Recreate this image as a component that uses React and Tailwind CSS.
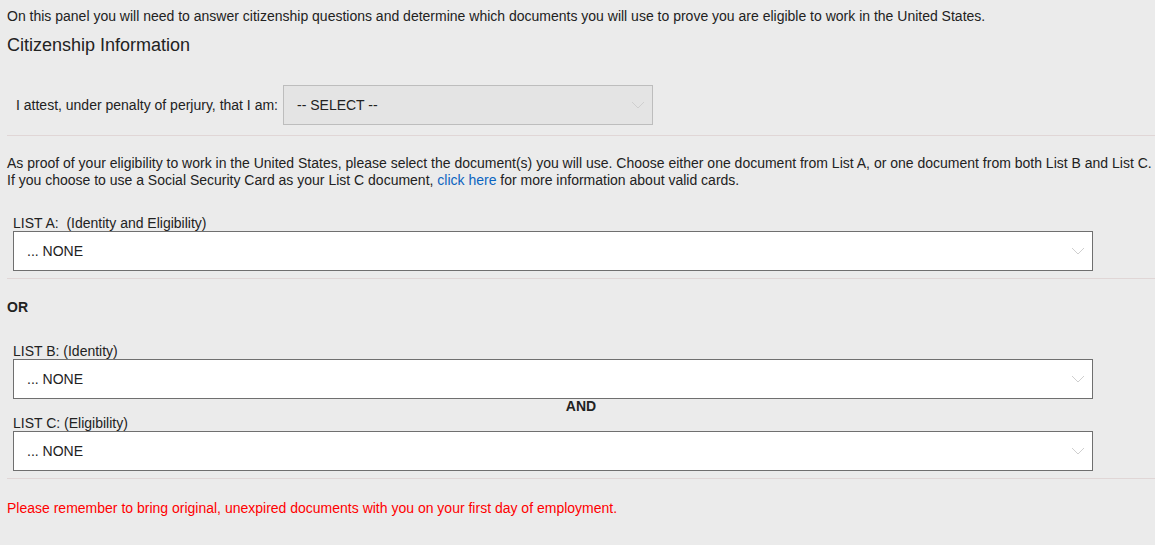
import React from 'react';

const Chevron = () => (
  <svg width="14" height="8" viewBox="0 0 14 8" className="shrink-0">
    <polyline points="1,1 7,7 13,1" fill="none" stroke="#cfcfcf" strokeWidth="1" />
  </svg>
);

const DocSelect = ({ label, value }) => (
  <div className="pl-[6px]">
    <div className="leading-[17px] whitespace-pre pt-[1px] -mb-[1px]">{label}</div>
    <div className="w-[1080px] h-[40px] bg-white border border-[#6f6f6f] flex items-center justify-between pl-[13px] pr-[7px]">
      <span>{value}</span>
      <Chevron />
    </div>
  </div>
);

const App = () => {
  return (
    <div
      className="min-h-[545px] bg-[#ebebeb] text-[#222] text-[14px] leading-[17px] pl-[7px] pt-[8px]"
      style={{ fontFamily: '"Liberation Sans", Arial, sans-serif' }}
    >
      <p>
        On this panel you will need to answer citizenship questions and determine which documents you will use to prove you are eligible to work in the United States.
      </p>
      <h2 className="text-[18px] leading-[22px] mt-[9px] text-[#222]">Citizenship Information</h2>

      {/* attestation */}
      <div className="flex items-center mt-[29px] pl-[9px]">
        <span className="mr-[5px]">I attest, under penalty of perjury, that I am:</span>
        <div className="w-[370px] h-[40px] bg-[#e4e4e4] border border-[#bdbdbd] flex items-center justify-between pl-[13px] pr-[7px]">
          <span>-- SELECT --</span>
          <Chevron />
        </div>
      </div>
      <div className="h-px bg-[#e0d6d6] mt-[10px]" />

      <p className="mt-[19px]">
        As proof of your eligibility to work in the United States, please select the document(s) you will use. Choose either one document from List A, or one document from both List B and List C.
        <br />
        If you choose to use a Social Security Card as your List C document,{' '}
        <a className="text-[#0b64c0]">click here</a> for more information about valid cards.
      </p>

      <div className="mt-[25px]">
        <DocSelect label="LIST A:  (Identity and Eligibility)" value="... NONE" />
      </div>
      <div className="h-px bg-[#e0d6d6] mt-[7px]" />

      <div className="font-bold mt-[20px]">OR</div>

      <div className="mt-[26px]">
        <DocSelect label="LIST B: (Identity)" value="... NONE" />
      </div>
      <div className="text-center font-bold leading-[15px]">AND</div>
      <DocSelect label="LIST C: (Eligibility)" value="... NONE" />
      <div className="h-px bg-[#e0d6d6] mt-[7px]" />

      <p className="text-[#ff0000] mt-[21px] pb-[28px]">
        Please remember to bring original, unexpired documents with you on your first day of employment.
      </p>
    </div>
  );
};

export default App;
